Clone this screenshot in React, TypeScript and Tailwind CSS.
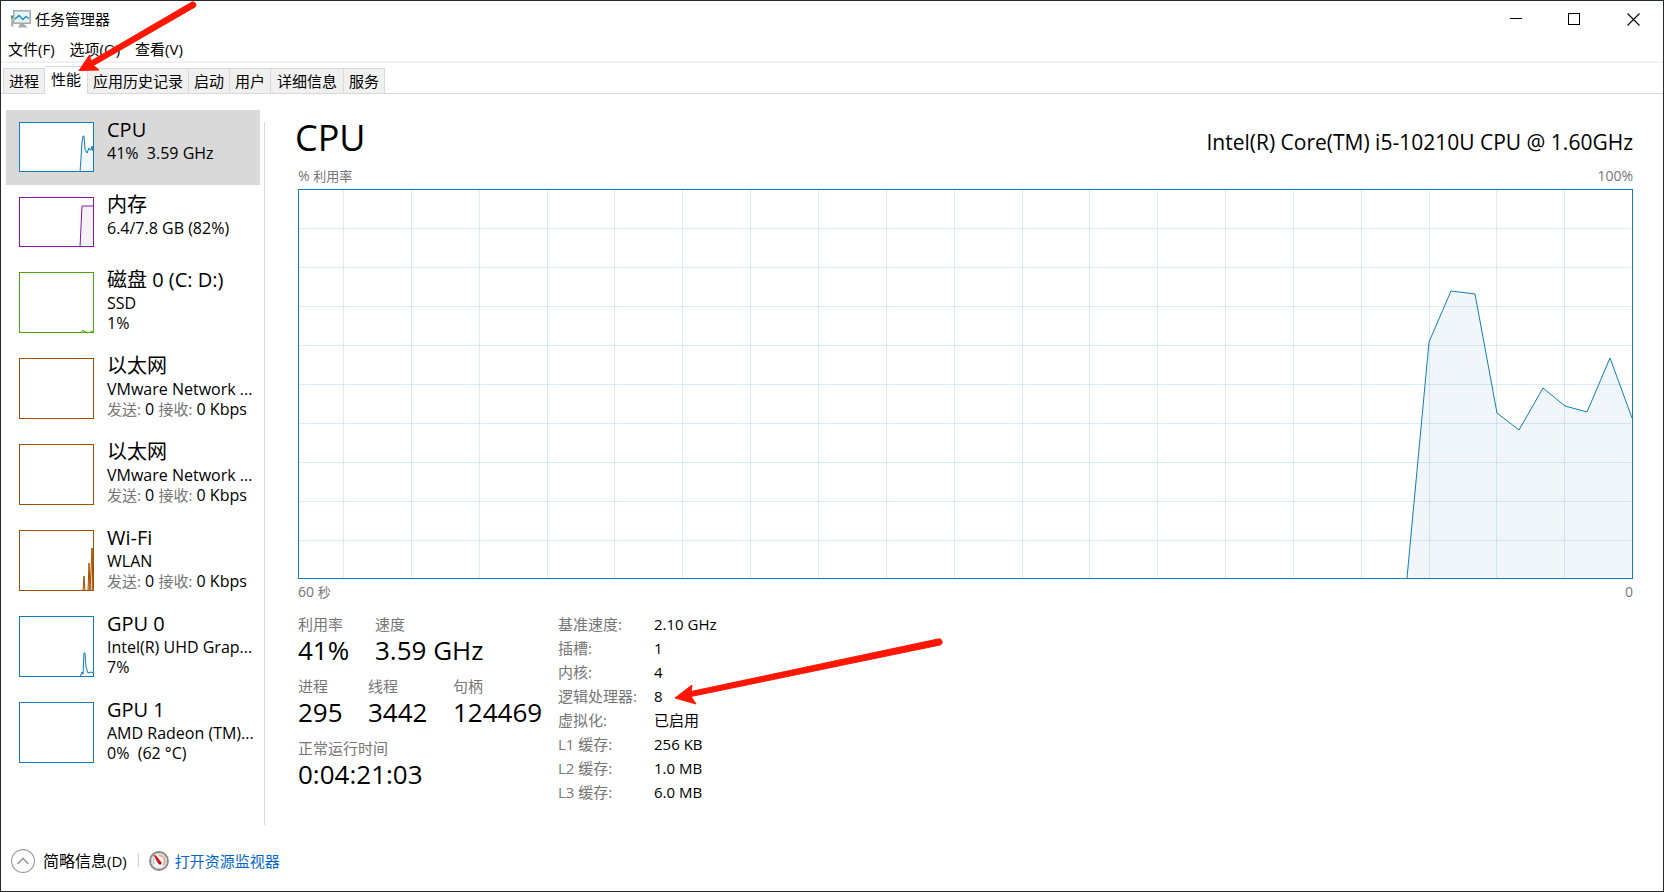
import type { ReactNode } from "react";

const BLUE = "#117dbb";
const PURPLE = "#8b12ae";
const GREEN = "#4da60c";
const BROWN = "#a74f01";

type Item = {
  title: string;
  lines: ReactNode[];
  color: string;
  fill: string;
  points: string;
  tall: boolean;
  selected?: boolean;
};

const traffic = (
  <>
    <span className="text-[15px] text-[#767676]">发送:</span> 0{" "}
    <span className="text-[15px] text-[#767676]">接收:</span> 0 Kbps
  </>
);

const items: Item[] = [
  {
    title: "CPU",
    lines: ["41%  3.59 GHz"],
    color: BLUE,
    fill: "#f1f6fa",
    points: "61,50 62,36 63,20 64,14 65,14 66,27 68,31 70,26 71,28 72,28 73,24 74,29 75,23",
    tall: false,
    selected: true,
  },
  { title: "内存", lines: ["6.4/7.8 GB (82%)"], color: PURPLE, fill: "#f4f2f4", points: "61,50 63,9 75,9", tall: false },
  {
    title: "磁盘 0 (C: D:)",
    lines: ["SSD", "1%"],
    color: GREEN,
    fill: "#eff7e9",
    points: "62,61 64,58 66,60 68,60 70,61 73,59 75,60",
    tall: true,
  },
  { title: "以太网", lines: ["VMware Network ...", traffic], color: BROWN, fill: "none", points: "", tall: true },
  { title: "以太网", lines: ["VMware Network ...", traffic], color: BROWN, fill: "none", points: "", tall: true },
  {
    title: "Wi-Fi",
    lines: ["WLAN", traffic],
    color: BROWN,
    fill: "#eecbb0",
    points: "64,61 65,46 66,61 69,61 70,33 71,61 72,40 73,18 74,61 74,18",
    tall: true,
  },
  {
    title: "GPU 0",
    lines: ["Intel(R) UHD Grap...", "7%"],
    color: BLUE,
    fill: "#f1f6fa",
    points: "61,61 63,56 64,58 65,37 66,37 67,51 69,57 72,56 75,57",
    tall: true,
  },
  { title: "GPU 1", lines: ["AMD Radeon (TM)...", "0%  (62 °C)"], color: BLUE, fill: "none", points: "", tall: true },
];

const tabs = ["进程", "性能", "应用历史记录", "启动", "用户", "详细信息", "服务"];

const details = [
  ["基准速度:", "2.10 GHz"],
  ["插槽:", "1"],
  ["内核:", "4"],
  ["逻辑处理器:", "8"],
  ["虚拟化:", "已启用"],
  ["L1 缓存:", "256 KB"],
  ["L2 缓存:", "1.0 MB"],
  ["L3 缓存:", "6.0 MB"],
];

const verticals = Array.from({ length: 19 }, (_, i) => Math.round(45 + i * 67.85) + 0.5);
const horizontals = Array.from({ length: 9 }, (_, i) => 39 * (i + 1) + 0.5);
const usage =
  "1109,389 1131,153 1153,102 1177,105 1199,224 1221,241 1245,199 1267,217 1289,223 1312,169 1334,229";

function AppIcon() {
  return (
    <svg width="21" height="18" viewBox="0 0 21 18" aria-hidden="true">
      <path d="M1 5 h2.500 v11.500 h-2.500z" fill="#b4b9bc" />
      <rect x="1" y="6" width="2" height="2.500" fill="#2fae3b" />
      <rect x="3.500" y="0.500" width="17" height="13" fill="#c4c9cc" stroke="#a5abae" />
      <rect x="5" y="2" width="14" height="10" fill="#e3f5fd" />
      <path d="M5 9 L9 5.500 L13 9.500 L16 6.500 L19 8.500" fill="none" stroke="#1b86bd" strokeWidth="1.300" />
      <path d="M10 14 h4 l3.500 3.500 h-9.500z" fill="#a4aaad" />
    </svg>
  );
}

function GaugeIcon() {
  return (
    <svg width="20" height="20" viewBox="0 0 20 20" aria-hidden="true">
      <circle cx="10" cy="10" r="9" fill="#f4f4f3" stroke="#85878a" strokeWidth="1.800" />
      <circle cx="10" cy="10" r="7.500" fill="none" stroke="#c9cbcb" />
      <path d="M10 4.500 A5.500 5.500 0 0 1 14 14" fill="none" stroke="#e9a184" strokeWidth="1.600" />
      <path d="M5 13 A5.500 5.500 0 0 1 5 7.500" fill="none" stroke="#b5b8b8" strokeWidth="1.200" />
      <path d="M4.500 4 L7 4.500 L12 11 L10.500 13 L8.500 11.500 Z" fill="#d8121c" />
      <circle cx="11" cy="12" r="1.600" fill="#b00f18" />
    </svg>
  );
}

function SidebarItem({ item }: { item: Item }) {
  const h = item.tall ? 61 : 50;
  return (
    <button
      type="button"
      className={`flex w-full items-start pt-3 pl-[13px] text-left ${item.tall ? "h-[86px]" : "h-[75px]"} ${item.selected ? "bg-[#d9d9d9]" : ""}`}
    >
      <svg width="75" height={h} viewBox={`0 0 75 ${h}`} className="shrink-0" aria-hidden="true">
        <rect width="75" height={h} fill="#fff" />
        {item.points && (
          <>
            <polygon points={`${item.points} 75,${h} 61,${h}`} fill={item.fill} />
            <polyline points={item.points} fill="none" stroke={item.color} strokeWidth="1" />
          </>
        )}
        <rect x="0.5" y="0.5" width="74" height={h - 1} fill="none" stroke={item.color} />
      </svg>
      <span className="-mt-1 flex min-w-0 flex-col pl-[13px]">
        <span className="h-[25px] text-[20px] leading-6 whitespace-nowrap">{item.title}</span>
        {item.lines.map((line, i) => (
          <span key={i} className="h-5 text-base leading-5 whitespace-pre">
            {line}
          </span>
        ))}
      </span>
    </button>
  );
}

function Stat({ label, value, className = "" }: { label: string; value: string; className?: string }) {
  return (
    <div className={className}>
      <dt className="text-[15px] leading-6 text-[#767676]">{label}</dt>
      <dd className="h-[38px] text-[26px] leading-7 whitespace-nowrap">{value}</dd>
    </div>
  );
}

export default function App() {
  return (
    <div className="relative flex min-h-screen flex-col border border-[#262b29] bg-white font-['Open_Sans','Noto_Sans_CJK_SC',sans-serif] text-black">
      <header className="flex h-9 items-center pl-[9px]">
        <AppIcon />
        <h1 className="flex-1 pl-1 text-[15px] leading-6">任务管理器</h1>
        <button type="button" aria-label="最小化" className="flex h-9 w-[58px] items-center justify-center">
          <svg width="12" height="12" viewBox="0 0 12 12">
            <path d="M0 5.500 H12" stroke="#000" />
          </svg>
        </button>
        <button type="button" aria-label="最大化" className="flex h-9 w-[58px] items-center justify-center">
          <svg width="12" height="12" viewBox="0 0 12 12">
            <rect x="0.5" y="0.5" width="11" height="11" fill="none" stroke="#000" />
          </svg>
        </button>
        <button type="button" aria-label="关闭" className="flex h-9 w-[60px] items-center justify-center">
          <svg width="13" height="13" viewBox="0 0 13 13">
            <path d="M0.500 0.500 L12.500 12.500 M12.500 0.500 L0.500 12.500" stroke="#000" strokeWidth="1.100" />
          </svg>
        </button>
      </header>

      <nav className="flex h-[26px] items-end gap-[15px] border-b-2 border-[#f0f0f0] pl-[7px] text-[15px] leading-6">
        <button type="button">文件(F)</button>
        <button type="button">选项(O)</button>
        <button type="button">查看(V)</button>
      </nav>

      <div role="tablist" className="flex h-[31px] items-end text-[15px] leading-6">
        <div className="w-[2px] self-stretch border-b border-[#d9d9d9]" />
        {tabs.map((t) =>
          t === "性能" ? (
            <button key={t} role="tab" aria-selected="true" type="button" className="h-7 border-t border-r border-[#d9d9d9] px-[6px] pb-1">
              {t}
            </button>
          ) : (
            <button
              key={t}
              role="tab"
              aria-selected="false"
              type="button"
              className={`h-[26px] border border-l-0 border-[#d9d9d9] bg-[#f0f0f0] first-of-type:border-l ${t === "详细信息" ? "px-[6px]" : "px-[5px]"}`}
            >
              {t}
            </button>
          ),
        )}
        <div className="flex-1 self-stretch border-b border-[#d9d9d9]" />
      </div>

      <div className="flex flex-1">
        <aside className="w-[259px] shrink-0 pt-4 pl-[5px]">
          {items.map((item, i) => (
            <SidebarItem key={i} item={item} />
          ))}
        </aside>
        <div className="mt-7 ml-1 w-px bg-[#d9d9d9]" />

        <main className="flex min-w-0 flex-1 flex-col pt-5 pr-[30px] pl-[33px]">
          <div className="-ml-[3px] flex h-[52px] items-start justify-between">
            <h2 className="text-[36px] leading-[48px]">CPU</h2>
            <p className="pt-[14px] text-[21px] leading-7">Intel(R) Core(TM) i5-10210U CPU @ 1.60GHz</p>
          </div>
          <div className="flex h-[23px] justify-between text-sm leading-5 text-[#767676]">
            <span>
              % <span className="text-[13px]">利用率</span>
            </span>
            <span>100%</span>
          </div>
          <svg
            className="min-h-[390px] w-full"
            viewBox="0 0 1335 390"
            preserveAspectRatio="none"
            role="img"
            aria-label="% 利用率"
          >
            <polygon points={`${usage} 1334,389`} fill="#f1f6fa" />
            <g stroke="#117dbb" strokeOpacity="0.15" shapeRendering="crispEdges">
              {verticals.map((x) => (
                <line key={x} x1={x} x2={x} y1="1" y2="389" />
              ))}
              {horizontals.map((y) => (
                <line key={y} x1="1" x2="1333" y1={y} y2={y} />
              ))}
            </g>
            <polyline points={usage} fill="none" stroke={BLUE} strokeWidth="1" />
            <rect x="0.5" y="0.5" width="1334" height="389" fill="none" stroke={BLUE} shapeRendering="crispEdges" />
          </svg>
          <div className="flex justify-between pt-[3px] text-sm leading-5 text-[#767676]">
            <span>
              60 <span className="text-[13px]">秒</span>
            </span>
            <span>0</span>
          </div>

          <div className="flex pt-[10px]">
            <dl className="w-[260px]">
              <div className="flex">
                <Stat label="利用率" value="41%" className="w-[77px]" />
                <Stat label="速度" value="3.59 GHz" />
              </div>
              <div className="flex">
                <Stat label="进程" value="295" className="w-[70px]" />
                <Stat label="线程" value="3442" className="w-[85px]" />
                <Stat label="句柄" value="124469" />
              </div>
              <Stat label="正常运行时间" value="0:04:21:03" />
            </dl>
            <dl className="text-[15px] leading-6">
              {details.map(([k, v]) => (
                <div key={k} className="relative flex h-6">
                  <dt className="w-24 text-[#767676]">{k}</dt>
                  <dd>{v}</dd>
                  {v === "8" && (
                    <svg width="270" height="68" viewBox="0 0 270 68" className="absolute top-[-47px] left-[116px]" aria-hidden="true">
                      <path
                        d="M1 61 L18 48 L17 54.500 L264 2 A3 3 0 0 1 266 8 L17 59.500 L22 67 Z"
                        fill="#ff1600"
                        stroke="#ff1600"
                        strokeLinejoin="round"
                      />
                    </svg>
                  )}
                </div>
              ))}
            </dl>
          </div>
        </main>
      </div>

      <footer className="flex h-[66px] items-center pl-[10px] text-[15px] leading-6">
        <button type="button" className="flex items-center gap-2 pt-[5px]">
          <svg width="24" height="24" viewBox="0 0 24 24" aria-hidden="true">
            <circle cx="12" cy="12" r="11.400" fill="none" stroke="#999" strokeWidth="1.100" />
            <path d="M6.500 15 L12 9.500 L17.500 15" fill="none" stroke="#999" strokeWidth="1.600" />
          </svg>
          <span>
            <span className="text-base leading-6">简略信息</span>(D)
          </span>
        </button>
        <div className="mt-1 ml-[11px] h-[14px] w-px bg-[#d0d0d0]" />
        <a href="#resmon" className="ml-[10px] flex items-center gap-[6px] pt-[5px] text-[#0066cc]">
          <GaugeIcon />
          打开资源监视器
        </a>
      </footer>

      <svg width="122" height="74" viewBox="0 0 122 74" className="pointer-events-none absolute top-0 left-[76px]" aria-hidden="true">
        <path
          d="M2 69.500 L12.500 54 L14 60 L115 1 A3 3 0 0 1 118 6 L16.500 64.500 L22 69 Z"
          fill="#ff1600"
          stroke="#ff1600"
          strokeLinejoin="round"
        />
      </svg>
    </div>
  );
}
